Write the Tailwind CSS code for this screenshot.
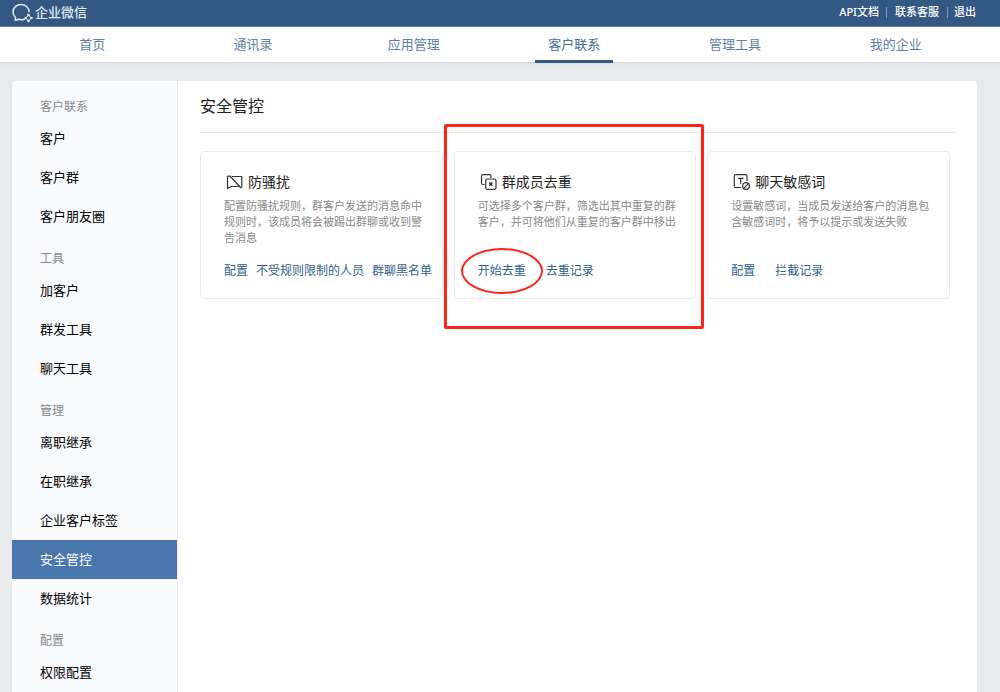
<!DOCTYPE html>
<html lang="zh-CN">
<head>
<meta charset="utf-8">
<meta name="viewport" content="width=device-width, initial-scale=1">
<title>企业微信 - 安全管控</title>
<script src="https://cdn.jsdelivr.net/npm/@tailwindcss/browser@4"></script>
</head>
<body class="flex min-h-screen flex-col bg-[#e7e9eb] font-['Noto_Sans','Noto_Sans_CJK_SC',sans-serif] text-[13px] text-[#222]">
<header>
  <div class="flex h-[27px] items-center justify-between border-b border-[#5b7aa0] bg-[#335884] pr-6 pl-3 pb-px text-white">
    <a href="#" class="flex items-center gap-[2px] font-medium text-[#e3eaf2]">
      <svg class="h-5 w-[21px]" viewBox="0 0 21 20" fill="none" stroke="currentColor" stroke-width="1.500" stroke-linecap="round" stroke-linejoin="round" aria-hidden="true">
        <path d="M12.300 16.200C10.500 16.800 8.500 16.800 6.800 16.300L3.200 17.300L3.600 14.600C1.800 13 1 11 1 9C1 4.600 4.700 1.500 9 1.500C13.300 1.500 16.800 4.500 17.100 8.600"/>
        <path d="M16.500 11.800L17.700 13.700L19.500 15L17.700 16.300L16.500 18.200L15.200 16.300L13.300 15L15.200 13.700Z" stroke-width="1"/>
        <g fill="currentColor" stroke="none"><circle cx="16.500" cy="12" r="1.300"/><circle cx="19.400" cy="15" r="1.300"/><circle cx="16.500" cy="18" r="1.300"/><circle cx="13.600" cy="15" r="1.300"/></g>
      </svg>
      企业微信
    </a>
    <div class="flex items-center text-[11px] font-medium">
      <a href="#">API文档</a>
      <span class="mr-2 ml-[7px] h-[11px] w-px bg-[#8199b5]"></span>
      <a href="#">联系客服</a>
      <span class="mr-[6px] ml-2 h-[11px] w-px bg-[#8199b5]"></span>
      <a href="#">退出</a>
    </div>
  </div>
  <nav class="h-9 border-b border-[#d9dbdd] bg-white pr-6 pl-3 text-[#5f7fa5] shadow-xs">
    <ul class="grid h-full grid-cols-6 text-center leading-[34px]">
      <li><a href="#">首页</a></li>
      <li><a href="#">通讯录</a></li>
      <li><a href="#">应用管理</a></li>
      <li class="flex justify-center"><a href="#" aria-current="page" class="h-9 w-[78px] border-b-3 border-[#335884] text-[#486d9a]">客户联系</a></li>
      <li><a href="#">管理工具</a></li>
      <li><a href="#">我的企业</a></li>
    </ul>
  </nav>
</header>
<div class="mt-[18px] mr-[23px] ml-3 flex flex-1 rounded-t bg-white shadow-xs">
  <aside class="w-[166px] shrink-0 rounded-tl border-r border-dotted border-[#d9dde3] bg-[#f9fafc] pt-[3px] leading-[39px] text-black">
    <h2 class="h-[35px] pt-3 pl-7 text-xs leading-[21px] text-[#888]">客户联系</h2>
    <a href="#" class="block pl-7">客户</a>
    <a href="#" class="block pl-7">客户群</a>
    <a href="#" class="block pl-7">客户朋友圈</a>
    <h2 class="h-[35px] pt-3 pl-7 text-xs leading-[21px] text-[#888]">工具</h2>
    <a href="#" class="block pl-7">加客户</a>
    <a href="#" class="block pl-7">群发工具</a>
    <a href="#" class="block pl-7">聊天工具</a>
    <h2 class="h-[35px] pt-3 pl-7 text-xs leading-[21px] text-[#888]">管理</h2>
    <a href="#" class="block pl-7">离职继承</a>
    <a href="#" class="block pl-7">在职继承</a>
    <a href="#" class="block pl-7">企业客户标签</a>
    <a href="#" aria-current="page" class="block bg-[#4a77ad] pl-7 text-white">安全管控</a>
    <a href="#" class="block pl-7">数据统计</a>
    <h2 class="h-[35px] pt-3 pl-7 text-xs leading-[21px] text-[#888]">配置</h2>
    <a href="#" class="block h-8 pl-7">权限配置</a>
  </aside>
  <main class="min-w-0 flex-1 px-[22px]">
    <h1 class="border-b border-[#e6e8ea] pb-px text-base leading-[50px]">安全管控</h1>
    <div class="mt-[18px] mr-[5px] grid grid-cols-3 gap-[11px]">
      <section class="flex h-[148px] flex-col rounded border border-[#e8eaec] px-[23px] pt-5">
        <h2 class="flex items-center gap-[5px] pl-[2px] text-sm leading-5">
          <svg class="h-4 w-[17px]" viewBox="0 0 17 16" fill="none" stroke="#333" stroke-width="1.200" stroke-linejoin="round" aria-hidden="true"><path d="M6 2.500H15.800V13.800M12.500 12.500H5L1.500 14.500V2L3.500 2.500M3.500 1.500L15 14"/></svg>
          防骚扰
        </h2>
        <p class="mt-[6px] -mr-2 h-12 text-[11px] leading-4 text-[#888]">配置防骚扰规则，群客户发送的消息命中规则时，该成员将会被踢出群聊或收到警告消息</p>
        <div class="mt-4 flex gap-2 text-xs leading-[18px] whitespace-nowrap text-[#2f6190]">
          <a href="#">配置</a><a href="#">不受规则限制的人员</a><a href="#">群聊黑名单</a>
        </div>
      </section>
      <section class="relative flex h-[148px] flex-col rounded border border-[#e8eaec] px-[23px] pt-5">
        <h2 class="flex items-center gap-[5px] pl-[2px] text-sm leading-5">
          <svg class="h-4 w-[17px]" viewBox="0 0 17 16" fill="none" stroke="#333" stroke-width="1.200" stroke-linejoin="round" aria-hidden="true"><path d="M4.500 10.500H3Q1.500 10.500 1.500 9V2.200Q1.500 .7 3 .7H9.500Q11 .7 11 2.200V4"/><rect x="5.700" y="5" width="10.300" height="10.300" rx="1.500"/><path d="M9.200 8.500L12.500 11.800M12.500 8.500L9.200 11.800" stroke-width="1.500"/></svg>
          群成员去重
        </h2>
        <p class="mt-[6px] -mr-2 h-12 text-[11px] leading-4 text-[#888]">可选择多个客户群，筛选出其中重复的群客户，并可将他们从重复的客户群中移出</p>
        <div class="mt-4 flex gap-5 text-xs leading-[18px] whitespace-nowrap text-[#2f6190]">
          <a href="#" class="relative">开始去重<span class="pointer-events-none absolute -inset-x-[17px] -inset-y-[14px] rounded-[50%] border-2 border-[#ff2318]"></span></a><a href="#">去重记录</a>
        </div>
        <span class="pointer-events-none absolute -top-7 -right-[9px] -bottom-[31px] -left-[11px] rounded-xs border-3 border-[#ff2318]"></span>
      </section>
      <section class="flex h-[148px] flex-col rounded border border-[#e8eaec] px-[23px] pt-5">
        <h2 class="flex items-center gap-[5px] pl-[2px] text-sm leading-5">
          <svg class="h-4 w-[17px]" viewBox="0 0 17 16" fill="none" stroke="#333" stroke-width="1.200" stroke-linejoin="round" aria-hidden="true"><path d="M8 13.500H2.800Q1.300 13.500 1.300 12V2.200Q1.300 .7 2.800 .7H12.500Q14 .7 14 2.200V7"/><path d="M5 4.300H10.500M7.700 4.300V9.800"/><circle cx="13" cy="12" r="3.400"/><path d="M10.700 14.300L15.300 9.700"/></svg>
          聊天敏感词
        </h2>
        <p class="mt-[6px] -mr-2 h-12 text-[11px] leading-4 text-[#888]">设置敏感词，当成员发送给客户的消息包含敏感词时，将予以提示或发送失败</p>
        <div class="mt-4 flex gap-5 text-xs leading-[18px] whitespace-nowrap text-[#2f6190]">
          <a href="#">配置</a><a href="#">拦截记录</a>
        </div>
      </section>
    </div>
  </main>
</div>
</body>
</html>
